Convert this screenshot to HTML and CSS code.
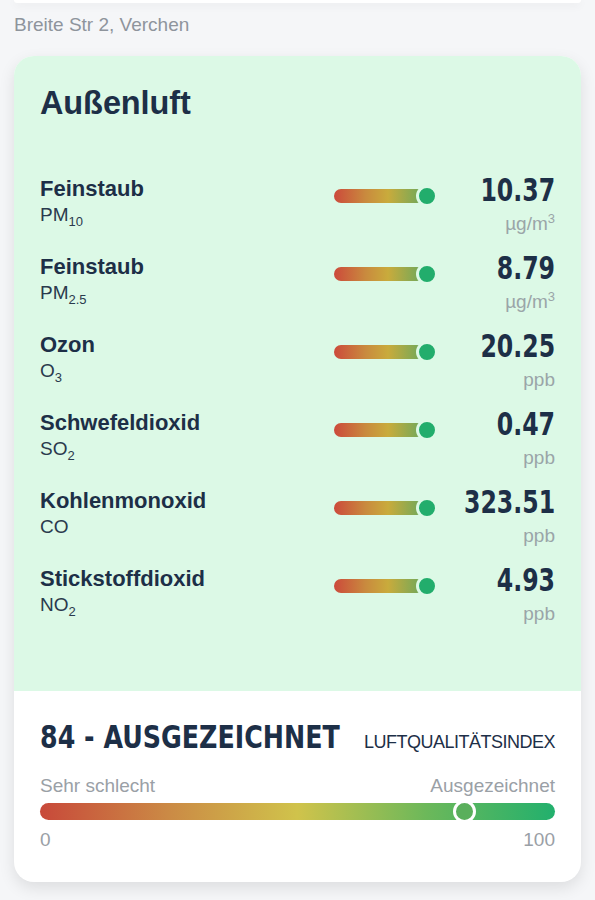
FILE: index.html
```html
<!DOCTYPE html>
<html lang="de">
<head>
  <meta charset="UTF-8" />
  <meta name="viewport" content="width=device-width, initial-scale=1.0"/>
  <title>Außenluft</title>
  <link rel="stylesheet" href="styles.css">
</head>
<body>
  <div class="prev-card"></div>
  <p class="address">Breite Str 2, Verchen</p>

  <div class="air-card">
    <div class="outdoor">
      <h1>Außenluft</h1>

      <div class="row">
        <div class="name">
          <strong>Feinstaub</strong>
          <span>PM<sub>10</sub></span>
        </div>
        <div class="mini-bar"><i class="dot"></i></div>
        <div class="value">
          <b>10.37</b>
          <span>µg/m<sup>3</sup></span>
        </div>
      </div>

      <div class="row">
        <div class="name">
          <strong>Feinstaub</strong>
          <span>PM<sub>2.5</sub></span>
        </div>
        <div class="mini-bar"><i class="dot"></i></div>
        <div class="value">
          <b>8.79</b>
          <span>µg/m<sup>3</sup></span>
        </div>
      </div>

      <div class="row">
        <div class="name">
          <strong>Ozon</strong>
          <span>O<sub>3</sub></span>
        </div>
        <div class="mini-bar"><i class="dot"></i></div>
        <div class="value">
          <b>20.25</b>
          <span>ppb</span>
        </div>
      </div>

      <div class="row">
        <div class="name">
          <strong>Schwefeldioxid</strong>
          <span>SO<sub>2</sub></span>
        </div>
        <div class="mini-bar"><i class="dot"></i></div>
        <div class="value">
          <b>0.47</b>
          <span>ppb</span>
        </div>
      </div>

      <div class="row">
        <div class="name">
          <strong>Kohlenmonoxid</strong>
          <span>CO</span>
        </div>
        <div class="mini-bar"><i class="dot"></i></div>
        <div class="value">
          <b>323.51</b>
          <span>ppb</span>
        </div>
      </div>

      <div class="row">
        <div class="name">
          <strong>Stickstoffdioxid</strong>
          <span>NO<sub>2</sub></span>
        </div>
        <div class="mini-bar"><i class="dot"></i></div>
        <div class="value">
          <b>4.93</b>
          <span>ppb</span>
        </div>
      </div>
    </div>

    <div class="index">
      <div class="index-head">
        <h2>84 - AUSGEZEICHNET</h2>
        <span>LUFTQUALITÄTSINDEX</span>
      </div>
      <div class="scale-labels">
        <span>Sehr schlecht</span>
        <span>Ausgezeichnet</span>
      </div>
      <div class="scale-bar">
        <i class="marker" style="left: 82.5%"></i>
      </div>
      <div class="scale-labels">
        <span>0</span>
        <span>100</span>
      </div>
    </div>
  </div>
</body>
</html>
```

FILE: styles.css
```css
body {
  margin: 0;
  background: #f5f6f8;
  font-family: 'Liberation Sans', Arial, sans-serif;
  color: #1d2f47;
}

.prev-card {
  height: 3px;
  margin: 0 14px;
  background: #fff;
  border-radius: 0 0 16px 16px;
  box-shadow: 0 2px 8px rgba(0,0,0,0.08);
}

.address {
  margin: 10px 14px 0;
  font-size: 19px;
  line-height: 24px;
  color: #8e949c;
}

.air-card {
  margin: 19px 14px 18px;
  border-radius: 20px;
  overflow: hidden;
  background: #fff;
  box-shadow: 0 6px 16px rgba(0,0,0,0.10);
}

.outdoor {
  background: #dcf9e6;
  padding: 28px 26px 48px;
}

h1 {
  margin: 0 0 53px;
  font-size: 32.5px;
  line-height: 38px;
  font-weight: bold;
  letter-spacing: -0.1px;
}

.row {
  display: flex;
  align-items: flex-start;
  height: 78px;
}

.name {
  flex: 1;
  display: flex;
  flex-direction: column;
}

.name strong {
  font-size: 22px;
  line-height: 27px;
}

.name span {
  font-size: 19px;
  line-height: 25px;
  color: #2a3a4d;
}

sub, sup {
  font-size: 13px;
  line-height: 0;
}

.mini-bar {
  position: relative;
  width: 90px;
  height: 14px;
  margin: 14px 21px 0 0;
  border-radius: 7px;
  background: linear-gradient(to right, #cc4a3b, #c98a3e 35%, #c9ab3c 60%, #6aa85c);
}

.dot {
  position: absolute;
  left: 100%;
  top: 50%;
  width: 16px;
  height: 16px;
  margin: -11px 0 0 -8px;
  border-radius: 50%;
  background: #22ad6c;
  border: 3px solid #dcf9e6;
}

.value {
  width: 110px;
  display: flex;
  flex-direction: column;
  align-items: flex-end;
  margin-top: -3px;
}

/* condensed look: no narrow font installed, so squeeze DejaVu */
.value b {
  font-family: 'DejaVu Sans Condensed', 'DejaVu Sans', sans-serif;
  font-size: 32px;
  line-height: 36px;
  transform: scaleX(0.82);
  transform-origin: right;
  white-space: nowrap;
}

.value span {
  margin-top: 4px;
  font-size: 19px;
  line-height: 24px;
  color: #9aa5a8;
}

.index {
  padding: 27px 26px 30px;
}

.index-head {
  display: flex;
  justify-content: space-between;
  align-items: baseline;
  margin-bottom: 18px;
}

h2 {
  width: 300px;
  margin: 0;
  font-family: 'DejaVu Sans Condensed', 'DejaVu Sans', sans-serif;
  font-size: 32px;
  line-height: 38px;
  font-weight: bold;
  white-space: nowrap;
  transform: scaleX(0.88);
  transform-origin: left;
}

.index-head span {
  font-size: 18px;
  letter-spacing: -0.5px;
}

.scale-labels {
  display: flex;
  justify-content: space-between;
  font-size: 19px;
  line-height: 24px;
  color: #9aa0a6;
}

.scale-bar {
  position: relative;
  height: 17px;
  margin: 5px 0 8px;
  border-radius: 9px;
  background: linear-gradient(to right, #c8493a, #cb8a45 25%, #d0c34b 50%, #6cb85a 75%, #22b06d);
}

.marker {
  position: absolute;
  top: 50%;
  width: 17px;
  height: 17px;
  margin: -11.5px 0 0 -11.5px;
  border-radius: 50%;
  border: 3px solid #fff;
  background: #5aaf5c;
}
```
